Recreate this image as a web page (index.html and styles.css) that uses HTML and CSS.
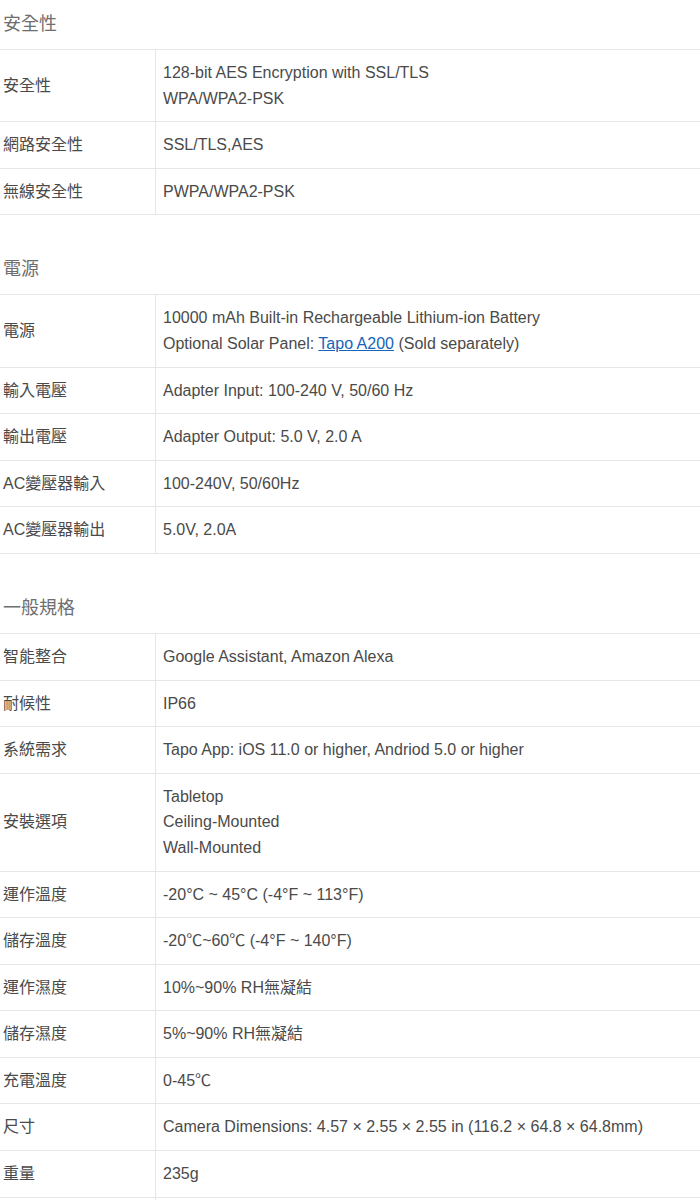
FILE: index.html
```html
<!DOCTYPE html>
<html lang="zh-Hant">
<head>
<meta charset="utf-8">
<link rel="stylesheet" href="styles.css">
</head>
<body>
<section class="spec">
  <h3 class="spec-title">安全性</h3>
  <table class="spec-table">
    <tr><th>安全性</th><td>128-bit AES Encryption with SSL/TLS<br>WPA/WPA2-PSK</td></tr>
    <tr><th>網路安全性</th><td>SSL/TLS,AES</td></tr>
    <tr><th>無線安全性</th><td>PWPA/WPA2-PSK</td></tr>
  </table>
</section>
<section class="spec">
  <h3 class="spec-title">電源</h3>
  <table class="spec-table">
    <tr><th>電源</th><td>10000 mAh Built-in Rechargeable Lithium-ion Battery<br>Optional Solar Panel: <a href="#">Tapo A200</a> (Sold separately)</td></tr>
    <tr><th>輸入電壓</th><td>Adapter Input: 100-240 V, 50/60 Hz</td></tr>
    <tr><th>輸出電壓</th><td>Adapter Output: 5.0 V, 2.0 A</td></tr>
    <tr><th>AC變壓器輸入</th><td>100-240V, 50/60Hz</td></tr>
    <tr><th>AC變壓器輸出</th><td>5.0V, 2.0A</td></tr>
  </table>
</section>
<section class="spec">
  <h3 class="spec-title">一般規格</h3>
  <table class="spec-table">
    <tr><th>智能整合</th><td>Google Assistant, Amazon Alexa</td></tr>
    <tr><th>耐候性</th><td>IP66</td></tr>
    <tr><th>系統需求</th><td>Tapo App: iOS 11.0 or higher, Andriod 5.0 or higher</td></tr>
    <tr><th>安裝選項</th><td>Tabletop<br>Ceiling-Mounted<br>Wall-Mounted</td></tr>
    <tr><th>運作溫度</th><td>-20°C ~ 45°C (-4°F ~ 113°F)</td></tr>
    <tr><th>儲存溫度</th><td>-20℃~60℃ (-4°F ~ 140°F)</td></tr>
    <tr><th>運作濕度</th><td>10%~90% RH無凝結</td></tr>
    <tr><th>儲存濕度</th><td>5%~90% RH無凝結</td></tr>
    <tr><th>充電溫度</th><td>0-45℃</td></tr>
    <tr><th>尺寸</th><td>Camera Dimensions: 4.57 × 2.55 × 2.55 in (116.2 × 64.8 × 64.8mm)</td></tr>
    <tr><th>重量</th><td>235g</td></tr>
    <tr><th>&nbsp;</th><td>&nbsp;</td></tr>
  </table>
</section>
</body>
</html>
```

FILE: styles.css
```css
html, body {
  margin: 0;
  padding: 0;
  background: #fff;
}
body {
  font-family: "Liberation Sans", Arial, "Noto Sans CJK TC", sans-serif;
  font-size: 16px;
  color: #4a4a4a;
}
.spec {
  margin: 0 0 30px 0;
}
.spec-title {
  margin: 0;
  padding: 0 3px;
  height: 49px;
  line-height: 49px;
  font-size: 18px;
  font-weight: normal;
  color: #6e6e6e;
}
.spec-table {
  width: 100%;
  border-collapse: collapse;
  border-spacing: 0;
  border-bottom: 1px solid #e6e6e6;
}
.spec-table tr {
  border-top: 1px solid #e6e6e6;
}
.spec-table th,
.spec-table td {
  padding: 10px 0;
  line-height: 25.6px;
  vertical-align: middle;
  text-align: left;
  font-weight: normal;
}
.spec-table th {
  width: 152px;
  padding-left: 3px;
  border-right: 1px solid #e6e6e6;
}
.spec-table td {
  padding-left: 7px;
}
.spec-table a {
  color: #1565b8;
  text-decoration: underline;
}
```
